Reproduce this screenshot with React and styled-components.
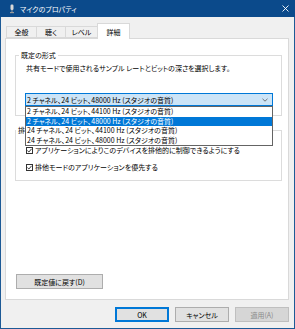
import React from 'react';
import styled, { createGlobalStyle } from 'styled-components';

const GlobalStyle = createGlobalStyle`
  html, body { margin: 0; padding: 0; background: #f0f0f0; }
  body {
    font-family: "Noto Sans CJK JP", "Noto Sans", sans-serif;
    font-size: 7px;
    line-height: 10px;
    font-feature-settings: "palt";
    color: #000;
  }
  * { box-sizing: border-box; }
`;

const Window = styled.div`
  width: 295px;
  height: 329px;
  display: flex;
  flex-direction: column;
  background: #f0f0f0;
`;

const TitleBar = styled.div`
  height: 17px;
  flex: none;
  background: #0b4a8b;
  color: #fff;
  display: flex;
  align-items: center;
  padding: 0 6px 0 9px;
`;

const TitleText = styled.span`
  margin-left: 5px;
  font-size: 7px;
`;

const CloseBox = styled.span`
  margin-left: auto;
  display: flex;
  align-items: center;
`;

const Body = styled.div`
  flex: 1;
  display: flex;
  flex-direction: column;
  border: 1px solid #1d5a96;
  border-top: none;
  padding: 6px 5px 6px 4px;
`;

const TabStrip = styled.div`
  height: 15px;
  flex: none;
  display: flex;
  align-items: flex-end;
  padding-left: 1px;
`;

const Tab = styled.div`
  width: ${p => p.$w}px;
  height: ${p => (p.$active ? 16 : 12)}px;
  margin-bottom: ${p => (p.$active ? -1 : 0)}px;
  margin-right: -1px;
  border: 1px solid #d9d9d9;
  border-bottom: ${p => (p.$active ? 'none' : '1px solid #d9d9d9')};
  background: ${p => (p.$active ? '#fff' : '#f0f0f0')};
  display: flex;
  align-items: ${p => (p.$active ? 'flex-start' : 'center')};
  padding-top: ${p => (p.$active ? 3 : 0)}px;
  justify-content: center;
  position: relative;
  z-index: ${p => (p.$active ? 1 : 0)};
`;

const Panel = styled.div`
  height: 262px;
  flex: none;
  background: #fff;
  border: 1px solid #d9d9d9;
  display: flex;
  flex-direction: column;
  padding: 0 6px 10px 9px;
`;

const Group = styled.fieldset`
  margin: ${p => p.$mt}px 0 0 0;
  padding: 0 0 ${p => p.$pb}px 0;
  border: 1px solid #dcdcdc;
  min-width: 0;
  width: 267px;
`;

const Legend = styled.legend`
  margin-left: ${p => p.$ml}px;
  padding: 0 2px;
  line-height: 10px;
`;

const GroupBody = styled.div`
  padding: 0 8px 0 9px;
  display: flex;
  flex-direction: column;
`;

const Description = styled.div`
  margin-top: 3px;
  padding-left: 1px;
`;

const ComboWrap = styled.div`
  position: relative;
  margin-top: 20px;
`;

const Combo = styled.div`
  height: 13px;
  border: 1px solid #0078d7;
  background: #cce4f7;
  display: flex;
  align-items: center;
  padding: 0 4px 0 1px;
`;

const Chevron = styled.span`
  margin-left: auto;
  display: flex;
`;

const DropList = styled.div`
  position: absolute;
  left: 0;
  right: 0;
  top: 100%;
  background: #fff;
  border: 1px solid #646464;
  z-index: 5;
`;

const Item = styled.div`
  height: 9.5px;
  line-height: 9.5px;
  padding-left: 1px;
  background: ${p => (p.$sel ? '#0078d7' : 'transparent')};
  color: ${p => (p.$sel ? '#fff' : '#000')};
  white-space: nowrap;
`;

const CheckRow = styled.label`
  display: flex;
  align-items: center;
  height: 10px;
  margin-top: ${p => p.$mt}px;
  padding-left: 1px;
`;

const Box = styled.span`
  width: 7px;
  height: 7px;
  border: 1px solid #333;
  background: #fff;
  margin-right: 2px;
  display: flex;
  align-items: center;
  justify-content: center;
  flex: none;
`;

const ResetButton = styled.button`
  margin-top: auto;
  margin-left: 1px;
  align-self: flex-start;
  width: 87px;
  height: 15px;
  border: 1px solid #adadad;
  background: #e1e1e1;
  font: inherit;
  color: #000;
  padding: 0;
`;

const ButtonRow = styled.div`
  margin-top: 7px;
  display: flex;
  justify-content: flex-end;
  gap: 6px;
  padding-right: 0;
`;

const Button = styled.button`
  width: 54px;
  height: 15px;
  padding: 0;
  font: inherit;
  border: 1px solid ${p => (p.$default ? '#0078d7' : p.$disabled ? '#bfbfbf' : '#adadad')};
  box-shadow: ${p => (p.$default ? 'inset 0 0 0 1px #0078d7' : 'none')};
  background: ${p => (p.$disabled ? '#d6d6d6' : '#e1e1e1')};
  color: ${p => (p.$disabled ? '#8a8a8a' : '#000')};
`;

const MicIcon = () => (
  <svg width="6" height="10" viewBox="0 0 6 10">
    <rect x="1.5" y="0.5" width="3" height="5.5" rx="1.2" fill="#d8d8d8" />
    <rect x="2.5" y="6" width="1" height="2" fill="#9a9a9a" />
    <rect x="1" y="8" width="4" height="1.2" fill="#9a9a9a" />
  </svg>
);

const CloseIcon = () => (
  <svg width="7" height="7" viewBox="0 0 7 7">
    <path d="M0.5 0.5 L6.5 6.5 M6.5 0.5 L0.5 6.5" stroke="#fff" strokeWidth="0.9" />
  </svg>
);

const ChevronIcon = () => (
  <svg width="6" height="4" viewBox="0 0 6 4">
    <path d="M0.5 0.8 L3 3.2 L5.5 0.8" stroke="#555" strokeWidth="0.8" fill="none" />
  </svg>
);

const CheckIcon = () => (
  <svg width="5" height="5" viewBox="0 0 5 5">
    <path d="M0.4 2.6 L1.9 4 L4.6 0.8" stroke="#222" strokeWidth="0.9" fill="none" />
  </svg>
);

const tabs = [
  { label: '全般', w: 31 },
  { label: '聴く', w: 30 },
  { label: 'レベル', w: 33 },
  { label: '詳細', w: 33, active: true },
];

const items = [
  '2 チャネル、24 ビット、44100 Hz (スタジオの音質)',
  '2 チャネル、24 ビット、48000 Hz (スタジオの音質)',
  '24 チャネル、24 ビット、44100 Hz (スタジオの音質)',
  '24 チャネル、24 ビット、48000 Hz (スタジオの音質)',
];

export default function App() {
  return (
    <>
      <GlobalStyle />
      <Window>
        <TitleBar>
          <MicIcon />
          <TitleText>マイクのプロパティ</TitleText>
          <CloseBox><CloseIcon /></CloseBox>
        </TitleBar>
        <Body>
          <TabStrip>
            {tabs.map(t => (
              <Tab key={t.label} $w={t.w} $active={t.active}>{t.label}</Tab>
            ))}
          </TabStrip>
          <Panel>
            <Group $mt={11} $pb={9}>
              <Legend $ml={3}>既定の形式</Legend>
              <GroupBody>
                <Description>共有モードで使用されるサンプル レートとビットの深さを選択します。</Description>
                <ComboWrap>
                  <Combo>
                    <span>{items[1]}</span>
                    <Chevron><ChevronIcon /></Chevron>
                  </Combo>
                  <DropList>
                    {items.map((it, i) => (
                      <Item key={i} $sel={i === 1}>{it}</Item>
                    ))}
                  </DropList>
                </ComboWrap>
              </GroupBody>
            </Group>
            <Group $mt={9} $pb={8}>
              <Legend $ml={0}>排他モード</Legend>
              <GroupBody>
                <CheckRow $mt={10}>
                  <Box><CheckIcon /></Box>
                  アプリケーションによりこのデバイスを排他的に制御できるようにする
                </CheckRow>
                <CheckRow $mt={7}>
                  <Box><CheckIcon /></Box>
                  排他モードのアプリケーションを優先する
                </CheckRow>
              </GroupBody>
            </Group>
            <ResetButton>既定値に戻す(D)</ResetButton>
          </Panel>
          <ButtonRow>
            <Button $default>OK</Button>
            <Button>キャンセル</Button>
            <Button $disabled>適用(A)</Button>
          </ButtonRow>
        </Body>
      </Window>
    </>
  );
}
